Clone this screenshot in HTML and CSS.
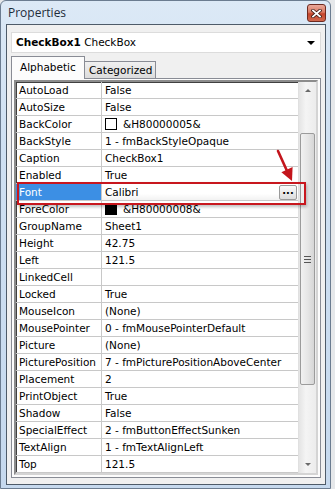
FILE: index.html
```html
<!DOCTYPE html>
<html lang="en">
<head>
  <meta charset="UTF-8">
  <title>Properties</title>
  <link rel="stylesheet" href="styles.css">
</head>
<body>
  <div class="window">
    <div class="titlebar">
      <span class="title">Properties</span>
      <span class="close">
        <svg width="11" height="9" viewBox="0 0 11 9">
          <path d="M2 1.5 L9 7.5 M9 1.5 L2 7.5" stroke="#3c1a14" stroke-width="3.4" stroke-linecap="square"/>
          <path d="M2 1.5 L9 7.5 M9 1.5 L2 7.5" stroke="#fff" stroke-width="1.8" stroke-linecap="square"/>
        </svg>
      </span>
    </div>
    <div class="client">
      <div class="objsel">
        <b>CheckBox1</b>&nbsp;CheckBox
        <span class="drop"></span>
      </div>
      <div class="tabs">
        <div class="tab active">Alphabetic</div>
        <div class="tab">Categorized</div>
      </div>
      <div class="tabpage">
        <div class="grid">
          <div class="rows">
            <div class="row"><div class="name">AutoLoad</div><div class="value">False</div></div>
            <div class="row"><div class="name">AutoSize</div><div class="value">False</div></div>
            <div class="row"><div class="name">BackColor</div><div class="value"><span class="swatch white"></span>&amp;H80000005&amp;</div></div>
            <div class="row"><div class="name">BackStyle</div><div class="value">1 - fmBackStyleOpaque</div></div>
            <div class="row"><div class="name">Caption</div><div class="value">CheckBox1</div></div>
            <div class="row"><div class="name">Enabled</div><div class="value">True</div></div>
            <div class="row selected"><div class="name">Font</div><div class="value">Calibri<span class="dots">...</span></div></div>
            <div class="row"><div class="name">ForeColor</div><div class="value"><span class="swatch black"></span>&amp;H80000008&amp;</div></div>
            <div class="row"><div class="name">GroupName</div><div class="value">Sheet1</div></div>
            <div class="row"><div class="name">Height</div><div class="value">42.75</div></div>
            <div class="row"><div class="name">Left</div><div class="value">121.5</div></div>
            <div class="row"><div class="name">LinkedCell</div><div class="value"></div></div>
            <div class="row"><div class="name">Locked</div><div class="value">True</div></div>
            <div class="row"><div class="name">MouseIcon</div><div class="value">(None)</div></div>
            <div class="row"><div class="name">MousePointer</div><div class="value">0 - fmMousePointerDefault</div></div>
            <div class="row"><div class="name">Picture</div><div class="value">(None)</div></div>
            <div class="row"><div class="name">PicturePosition</div><div class="value">7 - fmPicturePositionAboveCenter</div></div>
            <div class="row"><div class="name">Placement</div><div class="value">2</div></div>
            <div class="row"><div class="name">PrintObject</div><div class="value">True</div></div>
            <div class="row"><div class="name">Shadow</div><div class="value">False</div></div>
            <div class="row"><div class="name">SpecialEffect</div><div class="value">2 - fmButtonEffectSunken</div></div>
            <div class="row"><div class="name">TextAlign</div><div class="value">1 - fmTextAlignLeft</div></div>
            <div class="row"><div class="name">Top</div><div class="value">121.5</div></div>
          </div>
          <div class="vscroll">
            <div class="sbtn"><span class="up"></span></div>
            <div class="track">
              <div class="thumb"><span class="grip"></span></div>
            </div>
            <div class="sbtn"><span class="down"></span></div>
          </div>

          <!-- callout drawn over the grid -->
          <div class="highlight"></div>
          <svg class="arrow" width="30" height="42" viewBox="0 0 30 42">
            <path d="M7 7 L16.5 28" stroke="#c3151c" stroke-width="2.6" stroke-linecap="round"/>
            <path d="M21 37 L21.6 23 L10.4 28.3 Z" fill="#c3151c"/>
          </svg>
        </div>
      </div>
    </div>
  </div>
</body>
</html>
```

FILE: styles.css
```css
body {
  margin: 0;
  padding: 0;
  background-color: #e6e8ea;
  font-family: "DejaVu Sans", Verdana, sans-serif;
  font-size: 10.5px;
  color: #000;
}

.window {
  width: 329px;
  height: 487px;
  border: 1px solid #6b7c90;
  border-radius: 6px 6px 0 0;
  background: linear-gradient(to bottom, #dce9f6 0%, #cfe0f2 30%, #c6d9ee 100%);
  display: flex;
  flex-direction: column;
}

.titlebar {
  height: 23px;
  display: flex;
  justify-content: space-between;
  align-items: flex-start;
  padding: 0 4px 0 7px;
}
.titlebar .title {
  font-family: "Open Sans", "Noto Sans", sans-serif;
  font-size: 12px;
  line-height: 24px;
  color: #1e2c3a;
}
.titlebar .close {
  margin-top: 3px;
  width: 17px;
  height: 16px;
  border: 1px solid #6e2a20;
  border-radius: 3px;
  background: linear-gradient(to bottom, #eaa89a 0%, #d97a64 45%, #c4452c 55%, #d1694f 100%);
  display: flex;
  justify-content: center;
  align-items: center;
}

.client {
  flex: 1;
  margin: 0 4px 4px 5px;
  border: 1px solid #4e5b69;
  background-color: #f0f0f0;
  padding: 7px 4px 6px 4px;
  display: flex;
  flex-direction: column;
}

.objsel {
  position: relative;
  height: 19px;
  line-height: 19px;
  border: 1px solid #dcdcdc;
  background-color: #fff;
  padding-left: 4px;
}
.objsel b {
  font-weight: bold;
}
.objsel .drop {
  position: absolute;
  right: 5px;
  top: 8px;
  border-left: 4px solid transparent;
  border-right: 4px solid transparent;
  border-top: 4px solid #000;
}

.tabs {
  display: flex;
  align-items: flex-end;
  height: 23px;
  margin-top: 2px;
  position: relative;
  z-index: 1;
}
.tab {
  height: 16px;
  line-height: 16px;
  padding: 0 3px 0 4px;
  border: 1px solid #898c95;
  border-bottom: none;
  background: linear-gradient(to bottom, #f0f0f0, #dcdcdc);
  margin-left: -1px;
}
.tab.active {
  height: 22px;
  line-height: 20px;
  width: 64px;
  padding: 0 0 0 8px;
  margin-left: 0;
  background: #fcfcfc;
  margin-bottom: -1px;
}

.tabpage {
  flex: 1;
  border: 1px solid #898c95;
  background-color: #fcfcfc;
  padding: 1px 2px 2px 2px;
}

.grid {
  position: relative;
  display: flex;
  border-top: 2px solid #8c8c8c;
  border-left: 2px solid #8c8c8c;
  border-right: 2px solid #d4d4d4;
  border-bottom: 2px solid #d4d4d4;
  box-shadow: inset 1px 1px 0 #404040;
  background-color: #fff;
}

.rows {
  flex: 1;
}
.row {
  display: flex;
  height: 16px;
  line-height: 16px;
  border-bottom: 1px solid #c8c8c8;
}
.row .name {
  width: 82px;
  padding-left: 3px;
  border-right: 1px solid #c8c8c8;
  white-space: nowrap;
}
.row .value {
  flex: 1;
  padding-left: 3px;
  display: flex;
  align-items: center;
  white-space: nowrap;
  overflow: hidden;
}
.row.selected .name {
  background-color: #3c8fe4;
  color: #fff;
}
.row.selected .value {
  background: linear-gradient(to bottom, #fff 60%, #f2f2f2);
}

.swatch {
  width: 10px;
  height: 10px;
  border: 1px solid #000;
  margin-right: 6px;
}
.swatch.white {
  background-color: #fff;
}
.swatch.black {
  background-color: #000;
}

.dots {
  margin-left: auto;
  margin-right: 1px;
  width: 16px;
  height: 13px;
  line-height: 9px;
  text-align: center;
  font-weight: bold;
  font-size: 10px;
  border: 1px solid #9a9a9a;
  border-radius: 2px;
  background: linear-gradient(to bottom, #fafafa, #dcdcdc);
}

.vscroll {
  width: 17px;
  display: flex;
  flex-direction: column;
  background: linear-gradient(to right, #e4e4e4, #f4f4f4 40%, #ececec);
  border-left: 1px solid #e0e0e0;
}
.sbtn {
  height: 17px;
  display: flex;
  justify-content: center;
  align-items: center;
}
.sbtn .up {
  border-left: 3px solid transparent;
  border-right: 3px solid transparent;
  border-bottom: 3px solid #6a6a6a;
}
.sbtn .down {
  border-left: 3px solid transparent;
  border-right: 3px solid transparent;
  border-top: 3px solid #6a6a6a;
}
.track {
  flex: 1;
  padding: 34px 1px 0 1px;
}
.thumb {
  height: 250px;
  border: 1px solid #9b9b9b;
  border-radius: 2px;
  background: linear-gradient(to right, #f1f1f1, #e6e6e6 50%, #d6d6d6);
  display: flex;
  justify-content: center;
  align-items: center;
}
.thumb .grip {
  width: 7px;
  height: 5px;
  border-top: 1px solid #555;
  border-bottom: 1px solid #555;
  background: linear-gradient(to bottom, transparent 2px, #555 2px, #555 3px, transparent 3px);
}

.highlight {
  position: absolute;
  left: 1px;
  top: 100px;
  width: 285px;
  height: 19px;
  border: 2px solid #c8171e;
  box-shadow: 1px 2px 3px rgba(0,0,0,0.25);
}
.arrow {
  position: absolute;
  left: 255px;
  top: 62px;
}
```
